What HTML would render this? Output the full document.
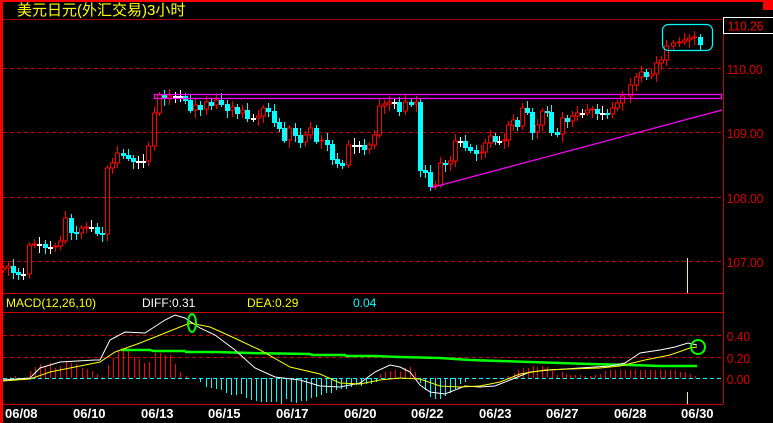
<!DOCTYPE html>
<html><head><meta charset="utf-8"><style>
html,body{margin:0;padding:0;background:#000;width:773px;height:423px;overflow:hidden}
svg{display:block}
text{font-family:"Liberation Sans","Noto Sans CJK SC",sans-serif}
</style></head><body>
<svg id="s" width="773" height="423" viewBox="0 0 773 423" xmlns="http://www.w3.org/2000/svg">
<rect width="773" height="423" fill="#000"/>
<rect x="0" y="0" width="773" height="2" fill="#f00"/>
<rect x="0" y="0" width="3" height="423" fill="#f00"/>
<rect x="763" y="0" width="10" height="10" fill="#f00"/>
<text x="17" y="15" fill="#ff0" font-size="15" font-family="'Noto Sans CJK SC',sans-serif">美元日元(外汇交易)3小时</text>
<line x1="3" y1="19.5" x2="723" y2="19.5" stroke="#a00"/>
<line x1="723.5" y1="19" x2="723.5" y2="404" stroke="#c00"/>
<g stroke="#c00" stroke-dasharray="4,3">
<line x1="3" y1="68.5" x2="723" y2="68.5"/>
<line x1="3" y1="132.5" x2="723" y2="132.5"/>
<line x1="3" y1="197.5" x2="723" y2="197.5"/>
<line x1="3" y1="261.5" x2="723" y2="261.5"/>
<line x1="3" y1="335.5" x2="723" y2="335.5"/>
<line x1="3" y1="357.5" x2="723" y2="357.5"/>
</g>
<line x1="3" y1="293.5" x2="723" y2="293.5" stroke="#c00"/>
<line x1="3" y1="312.5" x2="723" y2="312.5" stroke="#c00"/>
<line x1="3" y1="404.5" x2="723" y2="404.5" stroke="#c00"/>
<line x1="3" y1="378.5" x2="723" y2="378.5" stroke="#0ff" stroke-dasharray="4,3"/>
<g fill="#d00" font-size="13" transform="scale(0.92,1)">
<text x="790" y="74">110.00</text>
<text x="790" y="138">109.00</text>
<text x="790" y="203">108.00</text>
<text x="790" y="267">107.00</text>
<text x="790" y="341">0.40</text>
<text x="790" y="363">0.20</text>
<text x="790" y="384">0.00</text>
</g>
<rect x="723.5" y="17.5" width="50" height="16" fill="#000" stroke="#fff"/>
<text x="728" y="30.5" fill="#f00" font-size="13" transform="translate(58,0) scale(0.92,1)">110.26</text>
<g font-size="12">
<text x="6" y="307" fill="#ff0">MACD(12,26,10)</text>
<text x="142" y="307" fill="#fff">DIFF:0.31</text>
<text x="247" y="307" fill="#ff0">DEA:0.29</text>
<text x="353" y="307" fill="#0ff">0.04</text>
</g>
<g fill="#fff" font-size="13" font-weight="bold" font-family="'Liberation Mono',monospace">
<text x="5" y="418">06/08</text><text x="73" y="418">06/10</text><text x="141" y="418">06/13</text>
<text x="208" y="418">06/15</text><text x="276" y="418">06/17</text><text x="344" y="418">06/20</text>
<text x="411" y="418">06/22</text><text x="479" y="418">06/23</text><text x="546" y="418">06/27</text>
<text x="614" y="418">06/28</text><text x="681" y="418">06/30</text>
</g>
<g id="bars"></g>
<g id="candles"></g>
<rect x="154.5" y="94.5" width="567" height="4" fill="none" stroke="#f0f" stroke-width="1.3"/>
<line x1="430" y1="188" x2="722" y2="110" stroke="#f0f" stroke-width="1.2"/>
<rect x="662.5" y="24.5" width="50" height="26" rx="6" fill="none" stroke="#0ff" stroke-width="1.2"/>
<line x1="687.5" y1="258" x2="687.5" y2="293" stroke="#ff0"/>
<line x1="687.5" y1="392" x2="687.5" y2="404" stroke="#ff0"/>
<polyline fill="none" stroke="#0f0" stroke-width="2.5" points="121,350 150,350 153,351 185,351 186,352 216,352 250,353 310,354 312,355 345,355 346,356 375,356 400,357 440,358 470,360 500,361 530,362 560,363 590,364 630,365 660,366 697,366"/>
<polyline fill="none" stroke="#fff" stroke-width="1" points="3,380 30,378 40,368 60,362 95,360 100,360 110,340 125,332 145,333 165,320 175,315 185,318 200,328 215,335 235,350 255,368 275,377 300,380 320,386 340,387 360,383 375,372 390,365 400,367 410,372 420,385 430,392 445,394 465,386 480,387 495,386 510,380 530,372 550,370 580,368 610,366 625,363 640,353 660,350 675,347 688,343 697,345"/>
<polyline fill="none" stroke="#ff0" stroke-width="1" points="3,381 30,379 50,372 80,366 100,362 115,352 140,343 165,333 190,323 210,327 230,336 260,350 290,367 320,374 340,383 360,384 380,380 400,378 420,379 440,386 460,387 480,386 500,382 520,374 545,370 570,369 600,368 620,366 645,360 670,355 690,348 697,347"/>
<ellipse cx="192" cy="323" rx="4" ry="9" fill="none" stroke="#0f0" stroke-width="2"/>
<circle cx="698" cy="347" r="7" fill="none" stroke="#0f0" stroke-width="2"/>
</svg>
<script>
var NS="http://www.w3.org/2000/svg";
function el(p,t,a){var e=document.createElementNS(NS,t);for(var k in a)e.setAttribute(k,a[k]);p.appendChild(e);}
var cl=[[3,268],[8,266],[13,272],[18,274],[23,274],[29,245],[34,244],[39,244],[45,247],[50,247],[55,246],[60,241],[65,218],[71,232],[76,233],[81,228],[86,227],[91,227],[97,233],[102,234],[107,168],[112,163],[117,153],[123,155],[128,158],[133,161],[138,161],[143,161],[148,146],[154,113],[159,95],[164,98],[169,96],[175,96],[180,96],[185,100],[190,110],[195,105],[200,109],[206,102],[211,105],[216,100],[221,104],[227,110],[232,107],[237,113],[242,110],[247,118],[253,118],[258,116],[263,108],[268,111],[274,122],[279,128],[284,140],[289,128],[295,135],[300,142],[305,135],[310,128],[316,141],[321,140],[327,144],[332,159],[337,163],[342,165],[348,145],[354,145],[359,145],[364,149],[369,145],[374,135],[379,106],[384,104],[389,102],[394,102],[399,111],[405,102],[411,104],[416,102],[420,170],[425,172],[430,186],[435,185],[440,163],[445,164],[450,161],[455,141],[460,141],[465,147],[470,150],[476,153],[481,152],[485,143],[490,136],[495,141],[499,141],[504,140],[508,125],[513,120],[517,126],[522,108],[527,112],[532,132],[537,125],[542,111],[547,112],[551,132],[557,134],[562,118],[567,121],[572,116],[577,113],[582,113],[587,110],[592,109],[597,113],[602,113],[607,114],[612,108],[617,103],[622,96],[630,85],[636,77],[641,72],[646,76],[651,74],[656,63],[661,60],[666,46],[673,43],[679,42],[684,40],[689,38],[694,37],[700,44]];
var g=document.getElementById("candles");
for(var i=0;i<cl.length;i++){var x=cl[i][0]+.5,c=cl[i][1],o=i?cl[i-1][1]:270;
 var up=c<o, col=up?"#f00":(c==o?"#fff":"#0ff");
 var t=Math.min(o,c),b=Math.max(o,c);if(b-t<1)b=t+1;
 var w1=3+((i*7)%5),w2=3+((i*11)%6);
 el(g,"line",{x1:x,x2:x,y1:t-w1,y2:b+w2,stroke:col});
 if(up)el(g,"rect",{x:x-2,y:t,width:4,height:b-t,fill:"#000",stroke:col});
 else el(g,"rect",{x:x-2.5,y:t,width:5,height:b-t+1,fill:col});}
var hb=[[10,377],[15,376],[30,371],[35,367],[40,364],[45,366],[50,363],[55,368],[60,366],[66,362],[71,363],[76,364],[82,368],[87,369],[92,371],[97,374],[102,377],[108,365],[113,358],[118,351],[123,351],[128,351],[134,357],[139,359],[144,363],[149,362],[155,353],[160,353],[165,355],[170,355],[175,364],[180,372],[186,376],[200,382],[206,387],[211,388],[216,389],[221,390],[226,393],[231,395],[236,395],[241,394],[246,398],[251,400],[256,401],[261,402],[266,402],[271,402],[276,402],[281,404],[286,399],[291,402],[296,403],[301,401],[306,401],[311,398],[316,397],[321,395],[326,393],[331,393],[336,390],[341,389],[346,389],[351,387],[356,385],[361,386],[366,384],[371,384],[376,382],[380,374],[385,372],[390,371],[395,370],[400,372],[405,368],[410,367],[415,372],[420,383],[425,390],[430,397],[435,399],[440,399],[445,396],[450,393],[455,389],[460,384],[465,382],[508,376],[514,373],[518,370],[523,368],[528,368],[533,366],[537,367],[542,366],[547,367],[552,371],[557,375],[562,372],[566,374],[570,375],[575,375],[580,375],[585,376],[590,376],[595,375],[600,374],[605,371],[610,370],[615,370],[620,370],[625,370],[630,370],[635,370],[640,370],[645,370],[650,370],[655,370],[660,370],[665,370],[670,370],[675,370],[680,372],[685,372],[690,374],[695,376]];
var bg=document.getElementById("bars");
hb.forEach(function(h){var x=h[0]+.5;el(bg,"line",{x1:x,x2:x,y1:378,y2:h[1],stroke:h[1]<378?"#f00":"#0ff"});});
</script>
</body></html>
